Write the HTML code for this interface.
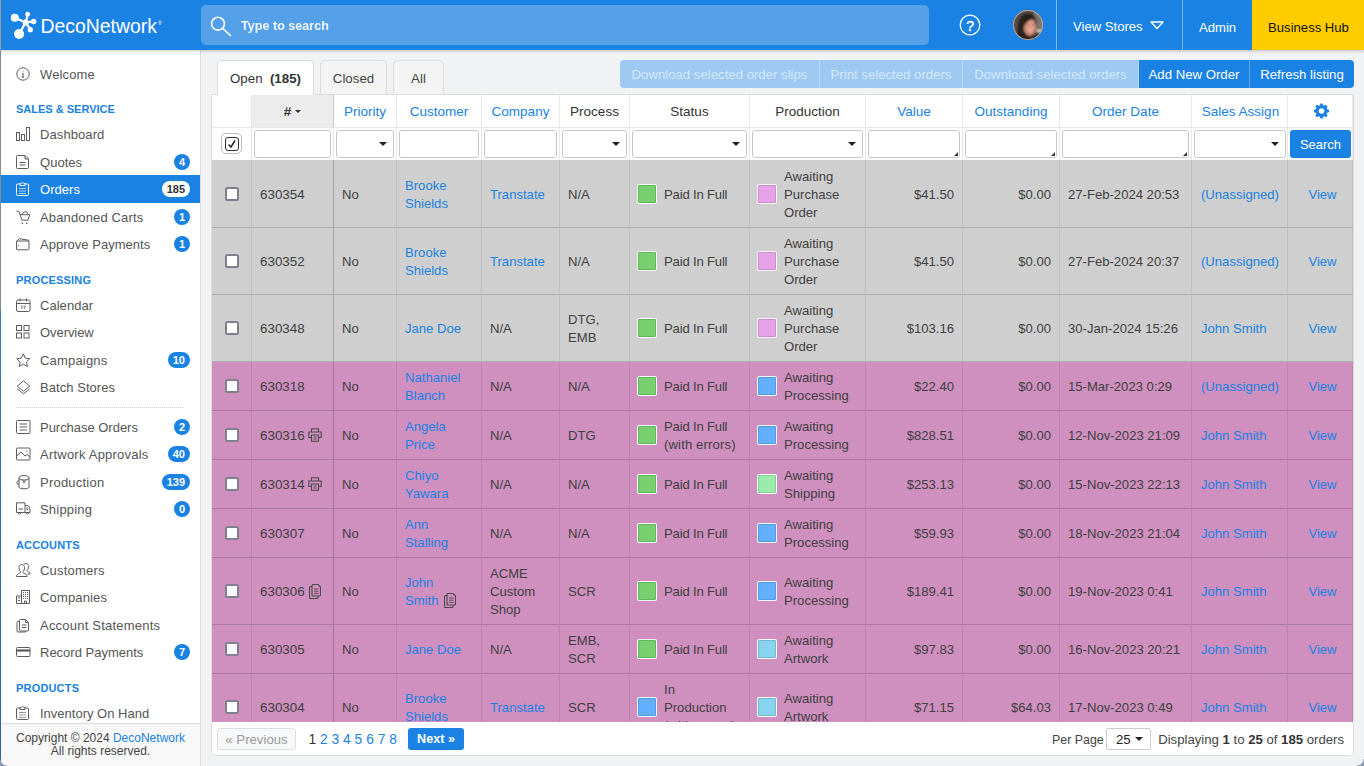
<!DOCTYPE html>
<html lang="en">
<head>
<meta charset="utf-8">
<title>Orders - DecoNetwork</title>
<style>
*{box-sizing:border-box;margin:0;padding:0}
html,body{width:1364px;height:766px;overflow:hidden}
body{font-family:"Liberation Sans",Arial,sans-serif;font-size:13px;color:#404040;background:#f1f2f3;position:relative}
a{color:#1a82e2;text-decoration:none}
/* top bar */
#top{position:absolute;left:0;top:0;width:1364px;height:50px;background:#1a82e2;z-index:5;box-shadow:0 1px 3px rgba(0,0,0,.22)}
#logo{position:absolute;left:10px;top:10px}
#logotext{position:absolute;left:40.500px;top:13.300px;font-size:19.400px;color:#fff;line-height:26px;white-space:nowrap}
#logotext sup{font-size:5px;position:relative;top:-8px;left:1px;vertical-align:baseline}
#search{position:absolute;left:201px;top:5px;width:728px;height:40px;border-radius:5px;background:#54a1e9}
#search span{position:absolute;left:40px;top:13px;font-size:12.600px;font-weight:bold;color:#fff;line-height:16px;opacity:.9;white-space:nowrap}
#search svg{position:absolute;left:9px;top:8.700px}
#help{position:absolute;left:959px;top:14px}
#avatar{position:absolute;left:1012px;top:9px}
#tri{position:absolute;left:1150px;top:21px}
.tsep{position:absolute;top:0;width:1px;height:50px;background:#7db9ee}
.titem{position:absolute;top:0;height:50px;line-height:54px;color:#fff;font-size:13.100px;white-space:nowrap}
#hub{position:absolute;left:1252px;top:0;width:112px;height:50px;background:#ffcc00;color:#111;line-height:56px;text-align:center;font-size:13.100px;padding-left:1px}
/* sidebar */
#side{position:absolute;left:0;top:50px;width:201px;height:716px;background:#fff;border-right:1px solid #dcdcdc}
#edge{position:absolute;left:0;top:0;width:1px;height:766px;background:linear-gradient(#939c9f 0,#939c9f 50px,#7e8e9e 50px,#7e8e9e 309px,#3a7ab2 312px,#2f62aa 766px);z-index:9}
.mi{position:absolute;left:1px;width:199px;height:28px;line-height:28px;font-size:13px;color:#555}
.mi .t{position:absolute;left:39px;top:1px;white-space:nowrap}
.mi .ic{position:absolute;left:15px;top:7px;fill:none;stroke:#5c5c5c;stroke-width:1;color:#5c5c5c}
.mi.act{background:#1a82e2;color:#fff}
.mi.act .ic{stroke:#fff;color:#fff}
.bdg{position:absolute;right:10px;top:6px;height:16px;min-width:16px;padding:0 5px;border-radius:8px;background:#1a82e2;color:#fff;font-size:11px;font-weight:bold;line-height:16px;text-align:center}
.mi.act .bdg{background:#fff;color:#333}
.sh{position:absolute;left:16px;font-size:11px;font-weight:bold;color:#1a82e2;line-height:14px;white-space:nowrap;letter-spacing:0}
.sep{position:absolute;left:16px;width:167px;border-top:1px dotted #ccc;height:0}
#sfoot{position:absolute;left:1px;top:673px;width:199px;height:43px;background:#f8f8f8;border-top:1px solid #dcdcdc;font-size:12px;line-height:13px;text-align:center;color:#444;padding-top:8px}
/* main */
.tab{position:absolute;top:60px;height:35px;border:1px solid #dcdcdc;border-bottom:none;border-radius:5px 5px 0 0;background:#f4f4f4;font-size:13.300px;line-height:36px;text-align:center;color:#444;white-space:nowrap}
.tab.on{background:#fff;color:#333;z-index:2}
#btns{position:absolute;left:620px;top:60px;height:28px;display:flex;border-radius:4px;overflow:hidden}
#btns div{height:28px;line-height:30px;color:#fff;font-size:13.200px;background:#1a82e2;text-align:center;border-right:1px solid rgba(255,255,255,.3);white-space:nowrap}
#btns div.dis{background:#9cc8f2;color:#d4e8fa}
#btns div:last-child{border-right:none}
#panel{position:absolute;left:211px;top:94px;width:1143px;height:662px;background:#fff;border:1px solid #dcdcdc;border-radius:0 0 5px 5px;overflow:hidden}
table{border-collapse:separate;border-spacing:0;table-layout:fixed;width:1141px;position:absolute;left:0;top:0}
th{height:33px;font-weight:normal;font-size:13.500px;color:#1a82e2;border-right:1px solid #e8e8e8;border-bottom:1px solid #e8e8e8;text-align:center;vertical-align:middle;padding-top:0;white-space:nowrap}
th.k{color:#333}
th.sorted{background:#ececec;color:#333;border-right:1px solid #c8c8c8;font-weight:bold}
.car{display:inline-block;vertical-align:middle;border:3px solid transparent;border-top:3px solid #333;border-bottom:none;margin-top:-1px}
th svg{vertical-align:middle}
tr.f td{height:32px;border-bottom:none;border-right:1px solid #e8e8e8;background:#fff;padding:0;position:relative}
.inp{position:absolute;left:2px;right:2px;top:2px;height:28px;border:1px solid #c6c6c6;border-radius:2.500px;background:#fff}
.inp.s:after{content:"";position:absolute;right:6px;top:11px;border:4px solid transparent;border-top:4px solid #222;border-bottom:none}
.inp.r:after{content:"";position:absolute;right:1px;bottom:1px;border:2px solid transparent;border-right-color:#333;border-bottom-color:#333}
.cball{position:absolute;left:9px;top:5px;width:21px;height:21px;border:1px solid #bbb;border-radius:5px;background:#fff}
.cball svg{position:absolute;left:2.500px;top:2.500px;width:14px;height:14px;border:1px solid #333;border-radius:3px}
.sbtn{position:absolute;left:2px;top:2px;width:61px;height:28px;border-radius:3px;background:#1a82e2;color:#fff;font-size:13px;line-height:29px;text-align:center}
tbody tr.d td{font-size:13.100px;line-height:18px;color:#404040;padding:1px 8px 0;white-space:nowrap;vertical-align:middle;border-right:1px solid rgba(0,0,0,.07);border-bottom:1px solid rgba(0,0,0,.16)}
tbody tr.d td.num{border-right:1px solid rgba(0,0,0,.2);white-space:nowrap;font-size:13.400px}
tr.g td{background:#cfcfcf}
tr.p td{background:#cf8fbf}
tr.h67 td{height:67px}
tr.h68 td{height:68px}
tbody tr.h68 td{padding-top:2px}
tr.h49 td{height:49px}
tbody tr.d td.n{text-align:right}
tbody tr.d td.c{text-align:center;padding-top:0}
tbody tr.d td.last{padding-left:13px;padding-top:2px}
tbody tr.h68 td.last{padding-top:3px}
th.last{padding-left:3px}
tbody tr.d td.st{padding-left:34px;position:relative}
.pif{letter-spacing:-.18px}
.we{letter-spacing:.14px}
tbody tr.d td.sa{padding-left:9px}
.sw{position:absolute;left:7px;top:50%;margin-top:-10px;width:20px;height:20px;border:1px solid rgba(255,255,255,.9);box-shadow:inset 0 0 0 1px rgba(0,0,0,.13);border-radius:2px}
.cb{display:block;margin:0 auto;width:14px;height:14px;border:2px solid #807f8e;border-radius:2.500px;background:#fff;position:relative;left:.5px}
.si{fill:none;stroke:#4a4a4a;stroke-width:1.100;vertical-align:-2px;margin-left:3px}
.si.dc{vertical-align:-3px;margin-left:2px}
td.num .si.dc{margin-left:4px}
#pager{position:absolute;left:0;top:627px;width:1141px;height:34px;background:#fff;font-size:13.200px}
.pbtn{position:absolute;top:6px;height:22px;line-height:23px;border-radius:3px;text-align:center;font-size:13.200px;white-space:nowrap}
.pbtn.prev{left:5px;width:79px;border:1px solid #dcdfe2;background:#f7f8f9;color:#999;line-height:21px}
.pbtn.next{left:196px;width:56px;background:#1a82e2;color:#fff;font-weight:bold;font-size:12.600px}
.pnums{position:absolute;left:96.500px;top:6px;line-height:23px;font-size:13.800px;color:#333;white-space:nowrap}
.pp{position:absolute;left:840px;top:7px;line-height:23px;font-size:12.400px;color:#444;white-space:nowrap}
.psel{position:absolute;left:894px;top:6px;width:45px;height:22px;border:1px solid #ccc;border-radius:2px;line-height:21px;padding-left:9px;color:#222;font-size:13.200px}
.psel:after{content:"";position:absolute;right:7px;top:8px;border:4px solid transparent;border-top:4px solid #222;border-bottom:none}
.pdisp{position:absolute;right:9px;top:6px;line-height:23px;font-size:13.170px;color:#444;white-space:nowrap}
.pdisp b{color:#333}
#corner{position:absolute;right:0;bottom:0;width:7px;height:7px;background:radial-gradient(circle at 0 0,transparent 6px,#8a9bb0 7px);z-index:9}
#corner2{position:absolute;left:0;bottom:0;width:7px;height:7px;background:radial-gradient(circle at 100% 0,transparent 6px,#8a9bb0 7px);z-index:10}

</style>
</head>
<body>
<div id="top">
<svg id="logo" viewBox="0 0 30 30" width="30" height="30">
<g stroke="#fff" stroke-width="2.200" stroke-linecap="round"><path d="M15.700 12.400L4.800 7.800M15.700 12.400L17.700 4.200M15.700 12.400L23.600 11.500M15.700 12.400L20.300 19.700M15.700 12.400L9.100 24"/></g>
<g fill="#fff"><circle cx="15.700" cy="12.400" r="3"/><circle cx="4.800" cy="7.800" r="4"/><circle cx="17.700" cy="4.200" r="2.400"/><circle cx="23.600" cy="11.500" r="2.800"/><circle cx="20.300" cy="19.700" r="2.600"/><circle cx="9.100" cy="24" r="5"/></g>
</svg>
<div id="logotext">DecoNetwork<sup>®</sup></div>
<div id="search"><svg width="24" height="24" viewBox="0 0 24 24" fill="none" stroke="#fff" stroke-width="1.600"><circle cx="8" cy="9.700" r="6.400"/><path d="M12.600 14.300L20.500 21.500" stroke-linecap="round"/></svg><span>Type to search</span></div>
<svg id="help" width="22" height="22" viewBox="0 0 22 22"><circle cx="11" cy="11" r="9.800" fill="none" stroke="#fff" stroke-width="1.300"/><text x="11" y="16.500" text-anchor="middle" font-family="Liberation Sans, sans-serif" font-size="14.500" fill="#fff" stroke="#fff" stroke-width=".35">?</text></svg>
<svg id="avatar" width="32" height="32" viewBox="-1 -1 32 32"><defs><clipPath id="avc"><circle cx="15" cy="15" r="14.500"/></clipPath><filter id="avb" x="-10%" y="-10%" width="120%" height="120%"><feGaussianBlur stdDeviation=".9"/></filter></defs><circle cx="15" cy="15" r="15" fill="#c9a68e"/><g clip-path="url(#avc)"><g filter="url(#avb)"><rect x="-2" y="-2" width="34" height="34" fill="#57514c"/><rect x="21" y="0" width="12" height="19" fill="#7c7670"/><path d="M5 32C3 16 5 4 14 3c6.500 0 9.500 4 9.500 10 0 5-1 9-3 12l-4 7.500z" fill="#2a221e"/><ellipse cx="16.800" cy="17" rx="6.300" ry="9" fill="#cc8370"/><ellipse cx="17.500" cy="16" rx="4.300" ry="5.500" fill="#e2a08b"/><ellipse cx="15" cy="14.800" rx="1.300" ry=".7" fill="#6b3a30"/><ellipse cx="20" cy="14.800" rx="1.300" ry=".7" fill="#6b3a30"/><path d="M18 5c-5 1-8 6-8.500 15 2-6 5-9.500 10.500-11 1.500 1 2.500 3 3 5.500 .8-4-1-8-5-9.500z" fill="#261e1a"/><path d="M13.800 21q3.200 2.400 6.400 0q-3.200 1-6.400 0z" fill="#fff4ee"/><path d="M19 31l1-5 6-3 3 8z" fill="#2a2a20"/><path d="M6 31l3-8 4 3-1 5z" fill="#2a221e"/><rect x="23.500" y="19.800" width="5.500" height="2" fill="#f3ece8"/></g></g><circle cx="15" cy="15" r="14.600" fill="none" stroke="#c9a68e" stroke-width=".8"/></svg>
<div class="tsep" style="left:1056px"></div>
<div class="titem" style="left:1073px">View Stores</div>
<svg id="tri" width="14" height="9" viewBox="0 0 14 9" fill="none" stroke="#fff" stroke-width="1.300"><path d="M1 1h12l-6 6.500z" stroke-linejoin="round"/></svg>
<div class="tsep" style="left:1182px"></div>
<div class="titem" style="left:1199px;line-height:56px">Admin</div>
<div id="hub">Business Hub</div>
</div>
<div id="side"><div class="mi" style="top:10px"><svg class="ic" viewBox="0 0 14.500 14.500" width="14.500" height="14.500"><circle cx="7" cy="7" r="6.2"/><path d="M7 6.2v4M5.8 10.2h2.4M6 6.2h1" /><circle cx="7" cy="4" r=".5" fill="currentColor" stroke="none"/></svg><span class="t" style="letter-spacing:0.143px">Welcome</span></div>
<div class="sh" style="top:51.5px">SALES &amp; SERVICE</div>
<div class="mi" style="top:70px"><svg class="ic" viewBox="0 0 14.500 14.500" width="14.500" height="14.500"><rect x=".5" y="5.5" width="3" height="8"/><rect x="5.5" y="7.5" width="3" height="6"/><rect x="10.500" y=".5" width="3" height="13"/></svg><span class="t" style="letter-spacing:0.089px">Dashboard</span></div>
<div class="mi" style="top:97.5px"><svg class="ic" viewBox="0 0 14.500 14.500" width="14.500" height="14.500"><path d="M.5 1.500a1 1 0 0 1 1-1h7.500l3.500 3.500v8.500a1 1 0 0 1-1 1h-10a1 1 0 0 1-1-1z"/><path d="M9 .5v3.500h3.500M3.500 7.500h6M3.500 10h6"/></svg><span class="t" style="letter-spacing:0.033px">Quotes</span><span class="bdg">4</span></div>
<div class="mi act" style="top:125px"><svg class="ic" viewBox="0 0 14.500 14.500" width="14.500" height="14.500"><path d="M4 2H1.500a1 1 0 0 0-1 1v9.500a1 1 0 0 0 1 1h10a1 1 0 0 0 1-1V3a1 1 0 0 0-1-1H9"/><path d="M4 3.500V1.500h1.200a1.400 1.400 0 0 1 2.600 0H9v2z"/><path d="M3 6.500h7M3 9h7M3 11.500h7" stroke-width=".8" opacity=".8"/></svg><span class="t" style="letter-spacing:0.033px">Orders</span><span class="bdg">185</span></div>
<div class="mi" style="top:152.5px"><svg class="ic" viewBox="0 0 14.500 14.500" width="14.500" height="14.500"><path d="M.5 1.200h2.300l3.200 9h5.900l1.900-5.500H3.800"/><path d="M6 4.500l1.800-2.600h2.800l1.600 2.600"/><circle cx="6.400" cy="13.300" r=".8" fill="currentColor" stroke="none"/><circle cx="10.600" cy="13.300" r=".8" fill="currentColor" stroke="none"/></svg><span class="t" style="letter-spacing:0.140px">Abandoned Carts</span><span class="bdg">1</span></div>
<div class="mi" style="top:180px"><svg class="ic" viewBox="0 0 14.500 14.500" width="14.500" height="14.500"><path d="M.5 4h11.700a.8 .8 0 0 1 .8 .8v7.200a.8 .8 0 0 1-.8 .8h-10.900a.8 .8 0 0 1-.8-.8z"/><path d="M.5 4.500l2.800-2.800 9.400 1.500v1"/><circle cx="2.500" cy="8.500" r=".6" fill="currentColor" stroke="none"/></svg><span class="t" style="letter-spacing:0.025px">Approve Payments</span><span class="bdg">1</span></div>
<div class="sh" style="top:222.5px;letter-spacing:.18px">PROCESSING</div>
<div class="mi" style="top:241px"><svg class="ic" viewBox="0 0 14.500 14.500" width="14.500" height="14.500"><rect x=".5" y="2" width="13.500" height="11.500" rx="1.500"/><path d="M.5 5.500h13.500M4 .5v3M10.500 .5v3"/><path d="M5 8h1v3M7.500 8h2l-1.300 3" stroke-width=".8"/></svg><span class="t" style="letter-spacing:0.037px">Calendar</span></div>
<div class="mi" style="top:268px"><svg class="ic" viewBox="0 0 14.500 14.500" width="14.500" height="14.500"><rect x=".5" y=".5" width="5" height="5"/><rect x="8" y=".5" width="5" height="5"/><rect x=".5" y="8" width="5" height="5"/><rect x="8" y="8" width="5" height="5"/></svg><span class="t" style="letter-spacing:-0.062px">Overview</span></div>
<div class="mi" style="top:296px"><svg class="ic" viewBox="0 0 14.500 14.500" width="14.500" height="14.500"><path d="M7.300 .8l2 4.300 4.500 .6-3.300 3.200 .8 4.600-4-2.300-4 2.300 .8-4.600L.800 5.700l4.500-.6z" stroke-linejoin="round"/></svg><span class="t" style="letter-spacing:0.189px">Campaigns</span><span class="bdg">10</span></div>
<div class="mi" style="top:323px"><svg class="ic" viewBox="0 0 14.500 14.500" width="14.500" height="14.500"><path d="M7.500 .8l6.300 5.400-6.300 5-6.300-5z" stroke-linejoin="round"/><path d="M1.200 8.800l6.300 5 6.300-5"/></svg><span class="t" style="letter-spacing:0.050px">Batch Stores</span></div>
<div class="sep" style="top:357px"></div>
<div class="mi" style="top:363px"><svg class="ic" viewBox="0 0 14.500 14.500" width="14.500" height="14.500"><rect x=".5" y=".5" width="13.500" height="13" rx="1"/><path d="M3.500 4h7.500M3.500 7h7.500M3.500 10h7.500"/></svg><span class="t" style="letter-spacing:-0.027px">Purchase Orders</span><span class="bdg">2</span></div>
<div class="mi" style="top:390px"><svg class="ic" viewBox="0 0 14.500 14.500" width="14.500" height="14.500"><rect x=".5" y="1" width="13.500" height="12" rx=".8"/><path d="M.5 9l4.500-4 4 4 2-1.500 3 2.500"/><circle cx="10.800" cy="4.200" r=".6" fill="currentColor" stroke="none"/></svg><span class="t" style="letter-spacing:0.224px">Artwork Approvals</span><span class="bdg">40</span></div>
<div class="mi" style="top:418px"><svg class="ic" viewBox="0 0 14.500 14.500" width="14.500" height="14.500"><ellipse cx="8" cy="2.800" rx="5" ry="2.200"/><path d="M3 2.800v9.400c0 1 2 1.600 5 1.600s5-.6 5-1.600V2.800"/><path d="M3 5.500c-2 .6-2.700 2-2 3.200l2 .8"/><path d="M6 4.500l2 2.500 2.300-2.500M8 7v1.500"/></svg><span class="t" style="letter-spacing:0.220px">Production</span><span class="bdg">139</span></div>
<div class="mi" style="top:445px"><svg class="ic" viewBox="0 0 14.500 14.500" width="14.500" height="14.500"><path d="M.5 .8h8.500v9.700h-8.500z"/><path d="M9 3.500h2.500c1.500 0 2.500 2 2.500 4.500v2.500h-5"/><path d="M2.500 7h4.500M11 5v2.500h1"/><path d="M2 10.500a1.500 1.500 0 0 0 3 0M10 10.500a1.500 1.500 0 0 0 3 0"/></svg><span class="t" style="letter-spacing:0.200px">Shipping</span><span class="bdg">0</span></div>
<div class="sh" style="top:487.5px;letter-spacing:.18px">ACCOUNTS</div>
<div class="mi" style="top:506px"><svg class="ic" viewBox="0 0 14.500 14.500" width="14.500" height="14.500"><path d="M.5 13.500c0-2.200 1.800-2.800 3.500-3.500.6-.3.600-1.200.2-1.800-.8-1-1.200-2.200-1.200-3.500 0-2 1.200-3.200 2.800-3.200s2.800 1.200 2.800 3.200c0 1.300-.4 2.500-1.200 3.500-.4.600-.4 1.500.2 1.800 1.700.7 3.500 1.300 3.500 3.500z"/><path d="M8 1.200c.5-.5 1.200-.7 1.900-.7 1.600 0 2.700 1.200 2.700 3 0 1.300-.4 2.300-1.100 3.200-.4.600-.4 1.400.2 1.700 1 .4 2.300 1 2.300 2.600h-2.500"/></svg><span class="t" style="letter-spacing:0.200px">Customers</span></div>
<div class="mi" style="top:533px"><svg class="ic" viewBox="0 0 14.500 14.500" width="14.500" height="14.500"><path d="M5.500 13.500V.5h8v13z"/><path d="M.5 13.500V6h5v7.500z"/><path d="M7 2.500h1M9 2.500h1M11 2.500h1M7 4.500h1M9 4.500h1M11 4.500h1M7 6.500h1M9 6.500h1M11 6.500h1M7 8.500h1M9 8.500h1M11 8.500h1M2 8h2M2 10.500h2" stroke-width="1.200"/><path d="M8.500 13.500v-2.500h2v2.500" /></svg><span class="t" style="letter-spacing:0.156px">Companies</span></div>
<div class="mi" style="top:561px"><svg class="ic" viewBox="0 0 14.500 14.500" width="14.500" height="14.500"><path d="M3.500 2.500a1 1 0 0 1 1-1h5l3 3v7.500a1 1 0 0 1-1 1h-7a1 1 0 0 1-1-1z"/><path d="M9.500 1.500v3h3M6 7h4.500M6 9.500h4.500"/><path d="M3.500 3.500H2a1 1 0 0 0-1 1v8.500a1 1 0 0 0 1 1h7a1 1 0 0 0 1-1"/></svg><span class="t" style="letter-spacing:0.217px">Account Statements</span></div>
<div class="mi" style="top:588px"><svg class="ic" viewBox="0 0 14.500 14.500" width="14.500" height="14.500"><rect x=".5" y="2.500" width="13.500" height="9" rx="1"/><path d="M.5 5.500h13.500" stroke-width="2.200"/></svg><span class="t">Record Payments</span><span class="bdg">7</span></div>
<div class="sh" style="top:630.5px;letter-spacing:.18px">PRODUCTS</div>
<div class="mi" style="top:649px"><svg class="ic" viewBox="0 0 14.500 14.500" width="14.500" height="14.500"><path d="M4 2H1.500a1 1 0 0 0-1 1v9.500a1 1 0 0 0 1 1h10a1 1 0 0 0 1-1V3a1 1 0 0 0-1-1H9"/><path d="M4 3.500V1.500h1.200a1.400 1.400 0 0 1 2.600 0H9v2z"/><path d="M3 6.500h7M3 9h7M3 11.500h7" stroke-width=".8" opacity=".8"/></svg><span class="t">Inventory On Hand</span></div>
<div id="sfoot">Copyright © 2024 <a>DecoNetwork</a><br>All rights reserved.</div></div>
<div id="main">
<div class="tab on" style="left:217px;width:97px">Open&nbsp; <b>(185)</b></div>
<div class="tab" style="left:320px;width:67px">Closed</div>
<div class="tab" style="left:393px;width:51px">All</div>
<div id="btns"><div class="dis" style="width:200px">Download selected order slips</div><div class="dis" style="width:143px">Print selected orders</div><div class="dis" style="width:176px">Download selected orders</div><div style="width:111px">Add New Order</div><div style="width:104px">Refresh listing</div></div>
<div id="panel"><table><colgroup><col style="width:40px"><col style="width:82px"><col style="width:63px"><col style="width:85px"><col style="width:78px"><col style="width:70px"><col style="width:120px"><col style="width:116px"><col style="width:97px"><col style="width:97px"><col style="width:132px"><col style="width:96px"><col style="width:65px"></colgroup>
<thead><tr class="hd"><th></th><th class="sorted"># <span class="car"></span></th><th>Priority</th><th>Customer</th><th>Company</th><th class="k">Process</th><th class="k">Status</th><th class="k">Production</th><th>Value</th><th>Outstanding</th><th>Order Date</th><th style="padding-left:2px">Sales Assign</th><th class="last"><svg width="16" height="16" viewBox="0 0 16 16"><path fill="#1a82e2" d="M15 9.300V6.700l-1.900-.4a5.300 5.300 0 0 0-.5-1.200l1.100-1.600-1.800-1.800-1.600 1.100a5.300 5.300 0 0 0-1.200-.5L8.700.500H6.300l-.4 1.800a5.300 5.300 0 0 0-1.200.5L3.100 1.700 1.300 3.500l1.100 1.600a5.300 5.300 0 0 0-.5 1.200L0 6.700v2.600l1.900.4c.1.400.3.800.5 1.200l-1.100 1.600 1.800 1.800 1.600-1.100c.4.200.8.400 1.200.5l.4 1.800h2.400l.4-1.800c.4-.1.800-.3 1.200-.5l1.600 1.100 1.800-1.800-1.100-1.600c.2-.4.400-.8.500-1.200zM7.500 10.800a2.800 2.800 0 1 1 0-5.600 2.800 2.800 0 0 1 0 5.600z"/></svg></th></tr>
<tr class="f"><td><span class="cball"><svg viewBox="0 0 12 12" width="12" height="12"><path d="M2.500 6.500l2.500 2.500 4-6.500" fill="none" stroke="#222" stroke-width="1.500"/></svg></span></td><td><div class="inp "></div></td><td><div class="inp s"></div></td><td><div class="inp "></div></td><td><div class="inp "></div></td><td><div class="inp s"></div></td><td><div class="inp s"></div></td><td><div class="inp s"></div></td><td><div class="inp r"></div></td><td><div class="inp r"></div></td><td><div class="inp r"></div></td><td><div class="inp s" style="right:1px"></div></td><td class="last"><div class="sbtn">Search</div></td></tr></thead><tbody>
<tr class="d g h68"><td class="c"><span class="cb"></span></td><td class="num">630354</td><td>No</td><td><a>Brooke<br>Shields</a></td><td><a>Transtate</a></td><td>N/A</td><td class="st s1"><span class="sw" style="background:#77cf6f"></span><span class="pif">Paid In Full</span></td><td class="st"><span class="sw" style="background:#e7a3e7"></span>Awaiting<br>Purchase<br>Order</td><td class="n">$41.50</td><td class="n">$0.00</td><td>27-Feb-2024 20:53</td><td class="sa"><a>(Unassigned)</a></td><td class="c last"><a>View</a></td></tr>
<tr class="d g h67"><td class="c"><span class="cb"></span></td><td class="num">630352</td><td>No</td><td><a>Brooke<br>Shields</a></td><td><a>Transtate</a></td><td>N/A</td><td class="st s1"><span class="sw" style="background:#77cf6f"></span><span class="pif">Paid In Full</span></td><td class="st"><span class="sw" style="background:#e7a3e7"></span>Awaiting<br>Purchase<br>Order</td><td class="n">$41.50</td><td class="n">$0.00</td><td>27-Feb-2024 20:37</td><td class="sa"><a>(Unassigned)</a></td><td class="c last"><a>View</a></td></tr>
<tr class="d g h67"><td class="c"><span class="cb"></span></td><td class="num">630348</td><td>No</td><td><a>Jane Doe</a></td><td>N/A</td><td>DTG,<br>EMB</td><td class="st s1"><span class="sw" style="background:#77cf6f"></span><span class="pif">Paid In Full</span></td><td class="st"><span class="sw" style="background:#e7a3e7"></span>Awaiting<br>Purchase<br>Order</td><td class="n">$103.16</td><td class="n">$0.00</td><td>30-Jan-2024 15:26</td><td class="sa"><a>John Smith</a></td><td class="c last"><a>View</a></td></tr>
<tr class="d p h49"><td class="c"><span class="cb"></span></td><td class="num">630318</td><td>No</td><td><a>Nathaniel<br>Blanch</a></td><td>N/A</td><td>N/A</td><td class="st s1"><span class="sw" style="background:#77cf6f"></span><span class="pif">Paid In Full</span></td><td class="st"><span class="sw" style="background:#62b0ff"></span>Awaiting<br>Processing</td><td class="n">$22.40</td><td class="n">$0.00</td><td>15-Mar-2023 0:29</td><td class="sa"><a>(Unassigned)</a></td><td class="c last"><a>View</a></td></tr>
<tr class="d p h49"><td class="c"><span class="cb"></span></td><td class="num">630316<svg class="si pr" viewBox="0 0 14 14" width="14" height="14"><path d="M3.500 4V.8h7V4M3.500 9.500H.8V4h12.400v5.500h-2.700M3.500 7h7v6.200h-7z"/><path d="M5.500 9h3M5.500 11h3" stroke-width=".9"/></svg></td><td>No</td><td><a>Angela<br>Price</a></td><td>N/A</td><td>DTG</td><td class="st s1"><span class="sw" style="background:#77cf6f"></span><span class="pif">Paid In Full</span><br><span class="we">(with errors)</span></td><td class="st"><span class="sw" style="background:#62b0ff"></span>Awaiting<br>Processing</td><td class="n">$828.51</td><td class="n">$0.00</td><td>12-Nov-2023 21:09</td><td class="sa"><a>John Smith</a></td><td class="c last"><a>View</a></td></tr>
<tr class="d p h49"><td class="c"><span class="cb"></span></td><td class="num">630314<svg class="si pr" viewBox="0 0 14 14" width="14" height="14"><path d="M3.500 4V.8h7V4M3.500 9.500H.8V4h12.400v5.500h-2.700M3.500 7h7v6.200h-7z"/><path d="M5.500 9h3M5.500 11h3" stroke-width=".9"/></svg></td><td>No</td><td><a>Chiyo<br>Yawara</a></td><td>N/A</td><td>N/A</td><td class="st s1"><span class="sw" style="background:#77cf6f"></span><span class="pif">Paid In Full</span></td><td class="st"><span class="sw" style="background:#9bebad"></span>Awaiting<br>Shipping</td><td class="n">$253.13</td><td class="n">$0.00</td><td>15-Nov-2023 22:13</td><td class="sa"><a>John Smith</a></td><td class="c last"><a>View</a></td></tr>
<tr class="d p h49"><td class="c"><span class="cb"></span></td><td class="num">630307</td><td>No</td><td><a>Ann<br>Stalling</a></td><td>N/A</td><td>N/A</td><td class="st s1"><span class="sw" style="background:#77cf6f"></span><span class="pif">Paid In Full</span></td><td class="st"><span class="sw" style="background:#62b0ff"></span>Awaiting<br>Processing</td><td class="n">$59.93</td><td class="n">$0.00</td><td>18-Nov-2023 21:04</td><td class="sa"><a>John Smith</a></td><td class="c last"><a>View</a></td></tr>
<tr class="d p h67"><td class="c"><span class="cb"></span></td><td class="num">630306<svg class="si dc" viewBox="0 0 12 15" width="12" height="15"><path d="M3 1.500a1 1 0 0 1 1-1h5l2.500 2.500v8a1 1 0 0 1-1 1h-6.500a1 1 0 0 1-1-1z"/><path d="M5 5h4.500M5 7.200h4.500M5 9.400h4.500" stroke-width=".9"/><path d="M3 2.500H1.500a1 1 0 0 0-1 1v10a1 1 0 0 0 1 1h6.500a1 1 0 0 0 1-1v-1.500"/></svg></td><td>No</td><td><a>John<br>Smith</a> <svg class="si dc" viewBox="0 0 12 15" width="12" height="15"><path d="M3 1.500a1 1 0 0 1 1-1h5l2.500 2.500v8a1 1 0 0 1-1 1h-6.500a1 1 0 0 1-1-1z"/><path d="M5 5h4.500M5 7.200h4.500M5 9.400h4.500" stroke-width=".9"/><path d="M3 2.500H1.500a1 1 0 0 0-1 1v10a1 1 0 0 0 1 1h6.500a1 1 0 0 0 1-1v-1.500"/></svg></td><td>ACME<br>Custom<br>Shop</td><td>SCR</td><td class="st s1"><span class="sw" style="background:#77cf6f"></span><span class="pif">Paid In Full</span></td><td class="st"><span class="sw" style="background:#62b0ff"></span>Awaiting<br>Processing</td><td class="n">$189.41</td><td class="n">$0.00</td><td>19-Nov-2023 0:41</td><td class="sa"><a>John Smith</a></td><td class="c last"><a>View</a></td></tr>
<tr class="d p h49"><td class="c"><span class="cb"></span></td><td class="num">630305</td><td>No</td><td><a>Jane Doe</a></td><td>N/A</td><td>EMB,<br>SCR</td><td class="st s1"><span class="sw" style="background:#77cf6f"></span><span class="pif">Paid In Full</span></td><td class="st"><span class="sw" style="background:#87d3f0"></span>Awaiting<br>Artwork</td><td class="n">$97.83</td><td class="n">$0.00</td><td>16-Nov-2023 20:21</td><td class="sa"><a>John Smith</a></td><td class="c last"><a>View</a></td></tr>
<tr class="d p h67"><td class="c"><span class="cb"></span></td><td class="num">630304</td><td>No</td><td><a>Brooke<br>Shields</a></td><td><a>Transtate</a></td><td>SCR</td><td class="st s1"><span class="sw" style="background:#62b0ff"></span>In<br>Production<br><span class="we">(with errors)</span></td><td class="st"><span class="sw" style="background:#87d3f0"></span>Awaiting<br>Artwork</td><td class="n">$71.15</td><td class="n">$64.03</td><td>17-Nov-2023 0:49</td><td class="sa"><a>John Smith</a></td><td class="c last"><a>View</a></td></tr>
</tbody></table><div id="pager"><div class="pbtn prev">« Previous</div><div class="pnums">1 <a>2</a> <a>3</a> <a>4</a> <a>5</a> <a>6</a> <a>7</a> <a>8</a></div><div class="pbtn next">Next »</div>
<div class="pp">Per Page</div><div class="psel">25</div><div class="pdisp">Displaying <b>1</b> to <b>25</b> of <b>185</b> orders</div></div></div>
</div>
<div id="edge"></div><div id="corner"></div><div id="corner2"></div>
</body>
</html>
